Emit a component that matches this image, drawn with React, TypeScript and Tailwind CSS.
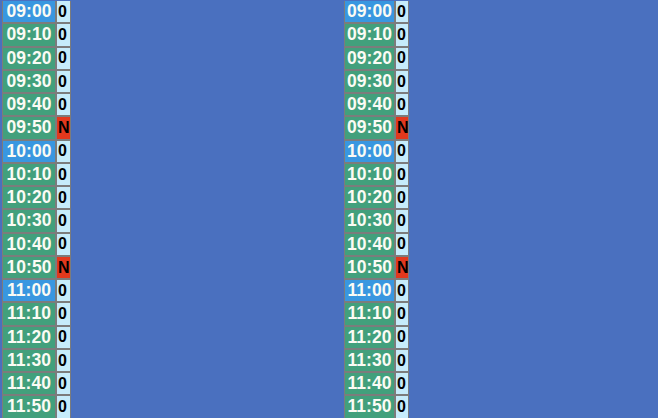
const SLOTS = [
	"09:00", "09:10", "09:20", "09:30", "09:40", "09:50",
	"10:00", "10:10", "10:20", "10:30", "10:40", "10:50",
	"11:00", "11:10", "11:20", "11:30", "11:40", "11:50",
];

const NO_SLOTS = new Set(["09:50", "10:50"]);

function Schedule({ narrow }: { readonly narrow?: boolean }): React.JSX.Element {
	return (
		<div
			className={`inline-grid gap-[2px] bg-[#7c7c7c] px-[1px] pb-[1px] ${
				narrow ? "grid-cols-[49px_12px]" : "grid-cols-[52px_13px]"
			}`}
		>
			{SLOTS.map((t) => {
				const hour = t.endsWith(":00");
				const no = NO_SLOTS.has(t);
				return (
					<div key={t} className="contents">
						<div
							className={`flex h-[21.25px] items-center justify-center text-[17.5px] font-bold leading-none text-[#fbfbf4] ${
								hour ? "bg-[#3997e0]" : "bg-[#42a07c]"
							}`}
						>
							{t}
						</div>
						<div
							className={`flex h-[21.25px] items-center pl-[1px] text-[16px] font-bold leading-none text-black ${
								no ? "bg-[#e2381d]" : "bg-[#c6ecfb]"
							}`}
						>
							{no ? "N" : "0"}
						</div>
					</div>
				);
			})}
		</div>
	);
}

export default function App(): React.JSX.Element {
	return (
		<div className="flex h-[418px] w-[658px] items-start overflow-hidden bg-[#4a70bf] font-['Liberation_Sans',Arial,sans-serif]">
			<div className="w-[342px] shrink-0 pl-[2px]">
				<Schedule />
			</div>
			<div className="pl-[2px]">
				<Schedule narrow />
			</div>
		</div>
	);
}
